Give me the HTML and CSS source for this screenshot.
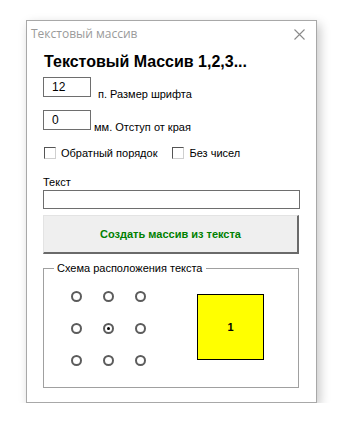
FILE: index.html
```html
<!DOCTYPE html>
<html lang="ru">
<head>
    <meta charset="UTF-8">
    <meta name="viewport" content="width=device-width, initial-scale=1.0">
    <title>Текстовый массив</title>
    <link rel="stylesheet" href="styles.css">
</head>
<body>

<div class="window">
    <div class="titlebar">
        <span class="title">Текстовый массив</span>
        <span class="close">
            <svg width="11" height="11" viewBox="0 0 11 11"><path d="M0.5 0.5 L10.5 10.5 M10.5 0.5 L0.5 10.5" stroke="#8a8a8a" stroke-width="1.1" fill="none"/></svg>
        </span>
    </div>

    <div class="content">
        <h1 class="heading">Текстовый Массив 1,2,3...</h1>

        <div class="field-row">
            <div class="num-input">12</div>
            <span class="field-label">п. Размер шрифта</span>
        </div>
        <div class="field-row second">
            <div class="num-input">0</div>
            <span class="field-label">мм. Отступ от края</span>
        </div>

        <div class="checks">
            <label class="check"><span class="box"></span>Обратный порядок</label>
            <label class="check"><span class="box"></span>Без чисел</label>
        </div>

        <div class="text-label">Текст</div>
        <div class="text-input"></div>

        <button class="make-btn">Создать массив из текста</button>

        <fieldset class="scheme">
            <legend>Схема расположения текста</legend>
            <div class="scheme-body">
                <div class="radios">
                    <span class="radio"></span><span class="radio"></span><span class="radio"></span>
                    <span class="radio"></span><span class="radio on"></span><span class="radio"></span>
                    <span class="radio"></span><span class="radio"></span><span class="radio"></span>
                </div>
                <div class="preview">1</div>
            </div>
        </fieldset>
    </div>
</div>

</body>
</html>
```

FILE: styles.css
```css
body {
    margin: 0;
    background: #ffffff;
    font-family: "Liberation Sans", Arial, sans-serif;
}
.window {
    margin: 20px 0 0 26px;
    width: 289px;
    height: 381px;
    border: 1px solid #a8a8a8;
    background: #ffffff;
    box-shadow: 3px 4px 10px rgba(0, 0, 0, 0.22);
}
.titlebar {
    height: 24px;
    display: flex;
    align-items: center;
    justify-content: space-between;
    padding: 0 11px 0 4px;
}
.title {
    font-family: "Open Sans", sans-serif;
    font-size: 12px;
    color: #9a9a9a;
}
.close {
    display: flex;
    margin-top: 2px;
}
.content {
    padding: 0 16px 0 16px;
}
.heading {
    margin: 7px 0 0 1px;
    font-size: 16px;
    line-height: 20px;
    font-weight: bold;
    color: #000000;
}
.field-row {
    display: flex;
    align-items: flex-end;
    margin-top: 5px;
}
.field-row.second {
    margin-top: 13px;
}
.num-input {
    box-sizing: border-box;
    width: 48px;
    height: 20px;
    border: 1px solid #6e6e6e;
    font-size: 12px;
    line-height: 18px;
    padding-left: 8px;
    color: #000000;
}
.field-label {
    font-size: 11px;
    color: #000000;
    margin-left: 7px;
    margin-bottom: -3px;
}
.second .field-label {
    margin-left: 3px;
}
.checks {
    display: flex;
    gap: 15px;
    margin-top: 17px;
    margin-left: 1px;
}
.check {
    display: flex;
    align-items: center;
    font-size: 11px;
    color: #000000;
}
.box {
    box-sizing: border-box;
    width: 12px;
    height: 12px;
    border: 1px solid #555555;
    border-right-color: #cfcfcf;
    border-bottom-color: #cfcfcf;
    margin-right: 5px;
}
.text-label {
    margin-top: 16px;
    font-size: 11px;
    line-height: 14px;
    color: #000000;
}
.text-input {
    box-sizing: border-box;
    height: 19px;
    border: 1px solid #6e6e6e;
    margin-top: 1px;
}
.make-btn {
    display: block;
    box-sizing: border-box;
    width: 256px;
    height: 39px;
    margin-top: 6px;
    background: #efefef;
    border: 1px solid #e3e3e3;
    border-right: 2px solid #6a6a6a;
    border-bottom: 2px solid #6a6a6a;
    font-family: "Liberation Sans", Arial, sans-serif;
    font-size: 11px;
    font-weight: bold;
    color: #008000;
    padding: 0;
}
.scheme {
    box-sizing: border-box;
    width: 256px;
    height: 127px;
    margin: 7px 0 0 0;
    padding: 0;
    border: 1px solid #a0a0a0;
}
.scheme legend {
    font-size: 11px;
    color: #000000;
    margin-left: 10px;
    padding: 0 3px;
    line-height: 14px;
}
.scheme-body {
    display: flex;
    align-items: flex-start;
}
.radios {
    display: grid;
    grid-template-columns: repeat(3, 11px);
    grid-auto-rows: 11px;
    column-gap: 21px;
    row-gap: 21px;
    margin: 16px 0 0 27px;
}
.radio {
    box-sizing: border-box;
    width: 11px;
    height: 11px;
    border: 2px solid #5c5c5c;
    border-radius: 50%;
    display: flex;
    align-items: center;
    justify-content: center;
}
.radio.on::after {
    content: "";
    width: 3px;
    height: 3px;
    border-radius: 50%;
    background: #000000;
}
.preview {
    box-sizing: border-box;
    width: 67px;
    height: 66px;
    margin: 19px 0 0 51px;
    background: #ffff00;
    border: 1px solid #000000;
    display: flex;
    align-items: center;
    justify-content: center;
    font-size: 11px;
    font-weight: bold;
    color: #000000;
}
```
